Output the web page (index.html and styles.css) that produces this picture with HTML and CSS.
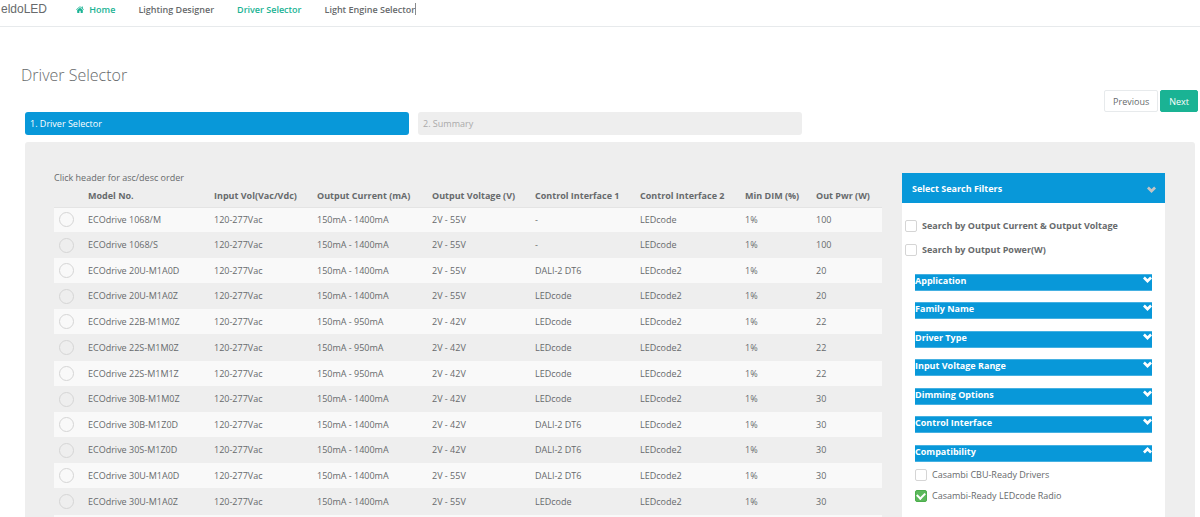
FILE: index.html
```html
<!DOCTYPE html>
<html lang="en">
<head>
  <meta charset="UTF-8">
  <meta name="viewport" content="width=device-width, initial-scale=1.0">
  <title>Driver Selector</title>
  <link rel="stylesheet" href="styles.css">
</head>
<body>
  <header class="topbar">
    <span class="logo">eldoLED</span>
    <nav class="nav">
      <a href="#" class="active">
        <svg class="home-icon" viewBox="0 0 16 14"><path d="M8 3.4 2.4 8v5.2q0 .6.6.6h3.700V9.600h2.600v4.200H13q.6 0 .6-.6V8z"/><path d="M15.800 7 13.600 5.200V1.200h-2v2.300L8.800 1.100q-.8-.6-1.600 0L.2 7l.8.9L8 2.100l7 5.800z"/></svg>
        Home
      </a>
      <a href="#">Lighting Designer</a>
      <a href="#" class="active">Driver Selector</a>
      <a href="#" class="caret">Light Engine Selector</a>
    </nav>
  </header>

  <h1 class="page-title">Driver Selector</h1>

  <div class="actions">
    <button class="btn">Previous</button>
    <button class="btn btn-next">Next</button>
  </div>

  <div class="steps">
    <a href="#" class="step current">1. Driver Selector</a>
    <a href="#" class="step">2. Summary</a>
  </div>

  <main class="panel">
    <div class="results">
      <p class="hint">Click header for asc/desc order</p>
      <table class="drivers">
        <colgroup>
          <col class="c-pick"><col class="c-model"><col class="c-narrow"><col class="c-volt"><col class="c-narrow">
          <col class="c-ctrl"><col class="c-ctrl"><col class="c-pwr"><col class="c-pwr">
        </colgroup>
        <thead>
          <tr>
            <th></th>
            <th>Model No.</th>
            <th>Input Vol(Vac/Vdc)</th>
            <th>Output Current (mA)</th>
            <th>Output Voltage (V)</th>
            <th>Control Interface 1</th>
            <th>Control Interface 2</th>
            <th>Min DIM (%)</th>
            <th>Out Pwr (W)</th>
          </tr>
        </thead>
        <tbody id="driverRows">
          <!-- filled from the drivers list -->
        </tbody>
      </table>
    </div>

    <aside class="filters">
      <button class="filters-head">
        Select Search Filters
        <svg class="chevron" viewBox="0 0 10 7"><path d="M1 1.300 5 5.200 9 1.300"/></svg>
      </button>
      <div class="filters-body">
        <label class="search-by"><input type="checkbox" class="check"> Search by Output Current &amp; Output Voltage</label>
        <label class="search-by"><input type="checkbox" class="check"> Search by Output Power(W)</label>

        <div class="groups">
          <button class="group">Application <svg class="chevron" viewBox="0 0 10 7"><path d="M1 1.300 5 5.200 9 1.300"/></svg></button>
          <button class="group">Family Name <svg class="chevron" viewBox="0 0 10 7"><path d="M1 1.300 5 5.200 9 1.300"/></svg></button>
          <button class="group">Driver Type <svg class="chevron" viewBox="0 0 10 7"><path d="M1 1.300 5 5.200 9 1.300"/></svg></button>
          <button class="group">Input Voltage Range <svg class="chevron" viewBox="0 0 10 7"><path d="M1 1.300 5 5.200 9 1.300"/></svg></button>
          <button class="group">Dimming Options <svg class="chevron" viewBox="0 0 10 7"><path d="M1 1.300 5 5.200 9 1.300"/></svg></button>
          <button class="group">Control Interface <svg class="chevron" viewBox="0 0 10 7"><path d="M1 1.300 5 5.200 9 1.300"/></svg></button>
          <button class="group">Compatibility <svg class="chevron" viewBox="0 0 10 7"><path d="M1 5.700 5 1.800 9 5.700"/></svg></button>
          <div class="options">
            <label><input type="checkbox" class="check"> Casambi CBU-Ready Drivers</label>
            <label><input type="checkbox" class="check" checked> Casambi-Ready LEDcode Radio</label>
          </div>
        </div>
      </div>
    </aside>
  </main>

  <script>
    const drivers = [
      ["ECOdrive 1068/M", "150mA - 1400mA", "2V - 55V", "-", "LEDcode", 100],
      ["ECOdrive 1068/S", "150mA - 1400mA", "2V - 55V", "-", "LEDcode", 100],
      ["ECOdrive 20U-M1A0D", "150mA - 1400mA", "2V - 55V", "DALI-2 DT6", "LEDcode2", 20],
      ["ECOdrive 20U-M1A0Z", "150mA - 1400mA", "2V - 55V", "LEDcode", "LEDcode2", 20],
      ["ECOdrive 22B-M1M0Z", "150mA - 950mA", "2V - 42V", "LEDcode", "LEDcode2", 22],
      ["ECOdrive 22S-M1M0Z", "150mA - 950mA", "2V - 42V", "LEDcode", "LEDcode2", 22],
      ["ECOdrive 22S-M1M1Z", "150mA - 950mA", "2V - 42V", "LEDcode", "LEDcode2", 22],
      ["ECOdrive 30B-M1M0Z", "150mA - 1400mA", "2V - 42V", "LEDcode", "LEDcode2", 30],
      ["ECOdrive 30B-M1Z0D", "150mA - 1400mA", "2V - 42V", "DALI-2 DT6", "LEDcode2", 30],
      ["ECOdrive 30S-M1Z0D", "150mA - 1400mA", "2V - 42V", "DALI-2 DT6", "LEDcode2", 30],
      ["ECOdrive 30U-M1A0D", "150mA - 1400mA", "2V - 55V", "DALI-2 DT6", "LEDcode2", 30],
      ["ECOdrive 30U-M1A0Z", "150mA - 1400mA", "2V - 55V", "LEDcode", "LEDcode2", 30],
      ["ECOdrive 30U-M1M0Z", "150mA - 1400mA", "2V - 55V", "LEDcode", "LEDcode2", 30]
    ];

    const rows = document.getElementById("driverRows");
    drivers.forEach(([model, current, voltage, ctrl1, ctrl2, power]) => {
      const row = document.createElement("tr");
      row.innerHTML = `
        <td><input type="radio" class="pick" name="driver" aria-label="${model}"></td>
        <td>${model}</td>
        <td>120-277Vac</td>
        <td>${current}</td>
        <td>${voltage}</td>
        <td>${ctrl1}</td>
        <td>${ctrl2}</td>
        <td>1%</td>
        <td>${power}</td>
      `;
      rows.appendChild(row);
    });
  </script>
</body>
</html>
```

FILE: styles.css
```css
* {
  box-sizing: border-box;
}
body {
  margin: 0;
  background-color: #fff;
  color: #676a6c;
  font-family: "Open Sans", Arial, sans-serif;
  font-size: 9px;
  line-height: 14px;
}
button {
  font-family: inherit;
  cursor: pointer;
}
a {
  color: inherit;
  text-decoration: none;
}
.topbar {
  display: flex;
  height: 27px;
  border-bottom: 1px solid #e7eaec;
}
.logo {
  width: 76px;
  padding: 2px 0 0 1px;
  font-family: "Liberation Sans", Arial, sans-serif;
  font-size: 12px;
}
.nav {
  display: flex;
  gap: 23px;
  padding-top: 3px;
  font-weight: 600;
}
.nav .active {
  color: #1ab394;
}
.nav .caret {
  height: 12px;
  border-right: 1px solid #8a8c8e;
}
.home-icon {
  width: 8px;
  height: 7px;
  margin-right: 3px;
  fill: currentColor;
}
.page-title {
  margin: 0;
  padding: 37px 21px 0;
  font-size: 16px;
  font-weight: 300;
  line-height: 22px;
}
.actions {
  display: flex;
  justify-content: flex-end;
  gap: 2px;
  padding: 4px 2px 0;
}
.btn {
  height: 22px;
  padding: 0 8px;
  border: 1px solid #e7eaec;
  border-radius: 2px;
  background-color: #fff;
  color: #676a6c;
  font-size: 9px;
}
.btn-next {
  border-color: #1ab394;
  background-color: #1ab394;
  color: #fff;
}
.steps {
  display: grid;
  grid-template-columns: repeat(3, 1fr);
  gap: 9px;
  padding: 0 5px 7px 25px;
}
.step {
  height: 23px;
  padding: 5px;
  border-radius: 3px;
  background-color: #eee;
  color: #aaa;
}
.step.current {
  background-color: #0898d9;
  color: #fff;
}
.panel {
  display: flex;
  align-items: flex-start;
  gap: 20px;
  margin: 0 5px 0 25px;
  padding: 29px 30px 30px 29px;
  border-radius: 3px;
  background-color: #eee;
}
.results {
  flex: 1;
}
.hint {
  margin: 0;
}
.drivers {
  width: 100%;
  table-layout: fixed;
  border-collapse: collapse;
}
.c-pick { width: 29px; }
.c-model { width: 126px; }
.c-narrow { width: 103px; }
.c-volt { width: 115px; }
.c-ctrl { width: 105px; }
.c-pwr { width: 71px; }
.drivers th,
.drivers td {
  padding: 0 5px;
  text-align: left;
  white-space: nowrap;
}
.drivers th {
  height: 22px;
  border-bottom: 1px solid #e4e4e4;
}
.drivers td {
  height: 26px;
}
.drivers tbody tr:nth-child(odd) {
  background-color: #f9f9f9;
}
.drivers tbody tr:nth-child(odd) td {
  height: 25px;
}
.drivers tbody tr:nth-child(6n) td {
  height: 27px;
}
.pick {
  display: block;
  appearance: none;
  width: 15px;
  height: 15px;
  margin: 0;
  border: 1px solid #d5d5d5;
  border-radius: 50%;
}
.pick:checked {
  background-color: #1ab394;
}
.filters {
  width: 263px;
  margin-top: 2px;
  background-color: #fff;
}
.filters-head {
  display: flex;
  justify-content: space-between;
  align-items: center;
  width: 100%;
  height: 30px;
  padding: 0 9px 0 10px;
  border: none;
  background-color: #0898d9;
  color: #fff;
  font-size: 9px;
  font-weight: 700;
}
.chevron {
  width: 9px;
  height: 7px;
  fill: none;
  stroke: currentColor;
  stroke-width: 3;
}
.filters-head .chevron {
  margin-top: 2px;
  color: #c4c4c4;
}
.filters-body {
  padding: 17px 3px 30px;
}
.filters label {
  display: flex;
  align-items: center;
  gap: 5px;
}
.filters .search-by {
  height: 12px;
  margin-bottom: 12px;
  font-weight: 700;
}
.check {
  display: grid;
  place-items: center;
  appearance: none;
  width: 12px;
  height: 12px;
  margin: 0;
  border: 1px solid #d5d5d5;
  border-radius: 2px;
  background-color: #fff;
}
.check:checked {
  border-color: #4cae4c;
  background-color: #5cb85c;
}
.check:checked::after {
  content: "";
  width: 6px;
  height: 4px;
  margin-bottom: 2px;
  border: solid #fff;
  border-width: 0 0 2px 2px;
  transform: rotate(-45deg);
}
.groups {
  padding: 6px 10px 0;
}
.group {
  display: flex;
  justify-content: space-between;
  align-items: flex-start;
  width: 100%;
  height: 17px;
  margin-bottom: 11px;
  padding: 0;
  border: solid #45b1e2;
  border-width: 1px 0;
  background-color: #0898d9;
  color: #fff;
  font-size: 9px;
  font-weight: 700;
  line-height: 12px;
}
.group:nth-child(even) {
  margin-bottom: 12px;
}
.group .chevron {
  margin-top: 1px;
}
.options label {
  height: 12px;
  margin-bottom: 9px;
}
.group + .options {
  margin-top: -4px;
}
```
